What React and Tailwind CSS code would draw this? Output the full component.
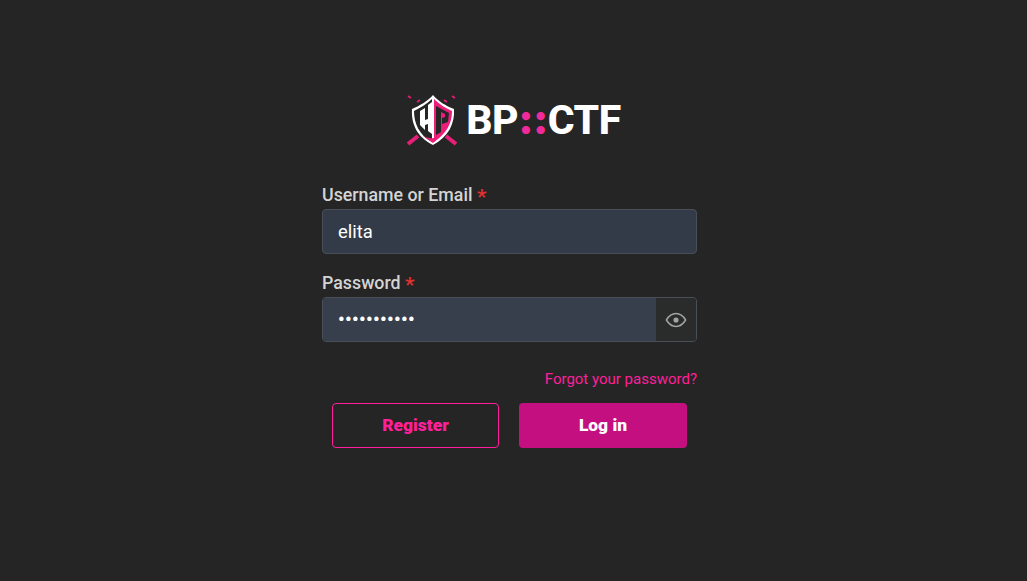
import React from "react";

function Shield() {
  return (
    <svg width="55" height="56" viewBox="0 0 55 56" className="shrink-0">
      <path d="M4 52 L14 44 M52 52 L42 44" stroke="#e91e78" strokeWidth="4" fill="none" />
      <path d="M4 4 L7 6 M48 4 L51 6 M13 10 L16 8 M40 8 L43 10" stroke="#e91e78" strokeWidth="1.6" fill="none" />
      <path d="M29 3 C24 9 15 14 8 17 C7 32 13 45 29 53 C44 45 51 32 50 17 C42 14 34 9 29 3 Z" fill="#ffffff" />
      <path d="M28 7 C23 12 16 16 10 19 C10 31 15 43 28 50 Z" fill="#262626" />
      <path d="M30 7 C35 12 41 16 48 19 C48 31 43 41 30 50 Z" fill="#ec1e7a" />
      <path d="M16 19 L21 16 L21 28 L24 27 L24 13 L28 10 L28 42 L24 39 L24 32 L21 33 L21 38 L16 33 Z" fill="#ffffff" />
      <path d="M32 14 L45 21 L44 30 L38 32 L38 26 L41 25 L41 22 L37 20 L37 40 L32 43 Z" fill="#262626" />
      <path d="M19 44 C25 47 31 47 38 43 L29 51 Z" fill="#ec1e7a" />
    </svg>
  );
}

function Label({ children }) {
  return (
    <label className="block h-[22px] text-[17.8px] leading-[22px] font-medium text-[#d4d4d4] mb-[3px]">
      {children} <span className="text-[#e03131] text-[21px] leading-[20px] font-semibold align-[-3px]">*</span>
    </label>
  );
}

export default function App() {
  return (
    <div
      className="min-h-[581px] bg-[#252525] flex flex-col items-center pt-[92px] pr-[8px]"
      style={{ fontFamily: '"Roboto", "Liberation Sans", sans-serif' }}
    >
      <div className="flex items-center h-[56px] w-[375px] justify-center gap-[7px] pl-[6px]">
        <Shield />
        <span className="text-[41px] leading-none font-extrabold text-white tracking-[-0.5px]">
          BP
          <span className="text-[#f02a9a] font-black" style={{ fontFamily: '"Inter", sans-serif' }}>::</span>
          CTF
        </span>
      </div>
      <form className="w-[375px] mt-[36px] flex flex-col">
        <Label>Username or Email</Label>
        <input
          readOnly
          value="elita"
          className="h-[45px] w-full rounded-[4px] border border-[#4a4f57] bg-[#343b48] px-[15px] text-[18.4px] text-white outline-none"
        />
        <div className="mt-[18px]">
          <Label>Password</Label>
        </div>
        <div className="h-[45px] w-full flex rounded-[4px] border border-[#4a4f57] overflow-hidden">
          <input
            readOnly
            type="password"
            value="elitapasswo"
            className="flex-1 min-w-0 bg-[#373f4d] px-[15px] text-[18.4px] font-bold tracking-[0.4px] text-white outline-none"
          />
          <div className="w-[40px] flex items-center justify-center bg-[#2a2c2c]">
            <svg width="22" height="22" viewBox="0 0 24 24" fill="none" stroke="#a3a3a3" strokeWidth="1.6" strokeLinecap="round" strokeLinejoin="round">
              <path d="M1.5 12 C4.5 7 8 5 12 5 C16 5 19.5 7 22.5 12 C19.5 17 16 19 12 19 C8 19 4.5 17 1.5 12 Z" />
              <circle cx="12" cy="12" r="2" fill="#a3a3a3" />
            </svg>
          </div>
        </div>
        <div className="flex justify-end mt-[27px]">
          <a className="text-[15px] leading-[20px] text-[#ff1f9a]">Forgot your password?</a>
        </div>
        <div className="flex justify-center gap-[20px] mt-[14px]">
          <button type="button" className="w-[167px] h-[45px] rounded-[4px] border border-[#ff1f9a] text-[#ff1f9a] text-[17.4px] font-black">
            Register
          </button>
          <button type="button" className="w-[168px] h-[45px] rounded-[4px] bg-[#c40f80] text-white text-[17.4px] font-black">
            Log in
          </button>
        </div>
      </form>
    </div>
  );
}
